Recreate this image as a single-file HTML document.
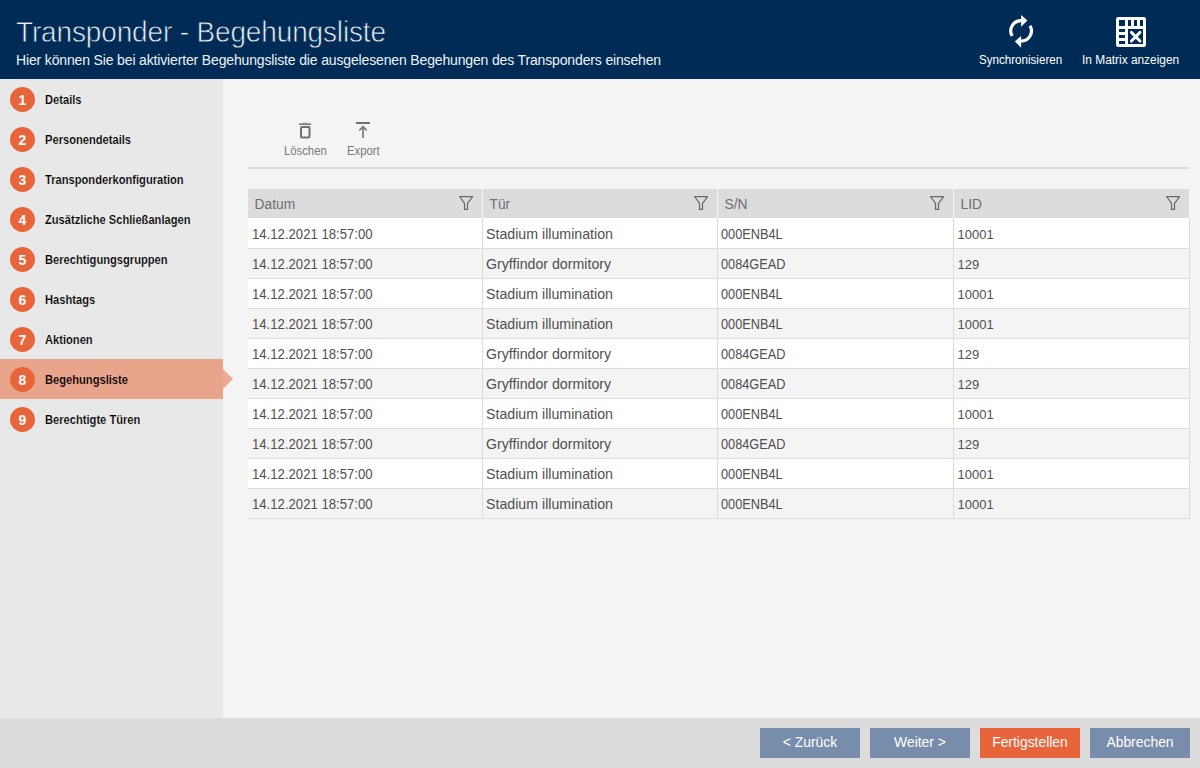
<!DOCTYPE html>
<html><head><meta charset="utf-8">
<style>
*{box-sizing:border-box;margin:0;padding:0}
html,body{width:1200px;height:768px;overflow:hidden;background:#f4f4f4;font-family:"Liberation Sans",sans-serif}
.abs{position:absolute;white-space:nowrap}
#hdr{position:absolute;left:0;top:0;width:1200px;height:79px;background:#002b56}
#title{left:16px;top:16px;font-size:28px;line-height:34px;color:#eef2f6;letter-spacing:-0.15px;-webkit-text-stroke:0.7px #002b56;transform:scaleY(1.08);transform-origin:0 26px}
#sub{left:16px;top:52px;font-size:14px;line-height:17px;color:#eef2f6;letter-spacing:-0.15px}
.hlbl{top:53px;font-size:11.6px;line-height:14px;color:#fff;transform:scaleY(1.1);transform-origin:0 11px}
#side{position:absolute;left:0;top:79px;width:223px;height:639px;background:#e8e8e8}
.item{position:absolute;left:0;width:223px;height:40px}
.item.sel{background:#e9a58c}
.circ{position:absolute;left:10px;top:8px;width:25px;height:25px;border-radius:50%;background:#e8643a;color:#fff;font-weight:bold;font-size:14px;line-height:26px;text-align:center}
.itxt{position:absolute;left:45px;top:14px;font-size:11.15px;line-height:14px;font-weight:bold;color:#000;white-space:nowrap;transform:scaleY(1.09);transform-origin:0 11px;-webkit-text-stroke:0.15px #e8e8e8}
.item.sel .itxt{-webkit-text-stroke-color:#e9a58c}
#arrow{position:absolute;left:223px;top:369px;width:0;height:0;border-top:10px solid transparent;border-bottom:10px solid transparent;border-left:10px solid #eeab94}
#foot{position:absolute;left:0;top:718px;width:1200px;height:50px;background:#dcdcdc}
.btn{position:absolute;top:728px;width:100px;height:30px;background:#788dac;color:#fff;font-size:13.9px;line-height:28px;text-align:center}
.btn.or{background:#e8643a}
.tlbl{top:144px;font-size:11.3px;line-height:14px;color:#777;transform:scaleY(1.12);transform-origin:0 11px}
#sep{position:absolute;left:248px;top:167px;width:942px;height:2px;background:#dcdcdc}
.hc{position:absolute;top:189px;height:29px;background:#dcdcdc}
.hc span{position:absolute;left:6.5px;top:9px;font-size:13.8px;line-height:14px;color:#6e6e6e;white-space:nowrap}
.fn{position:absolute;top:3px;width:24px;height:22px}
.fn svg{display:block}
.row{position:absolute;left:248px;width:941px;border-bottom:1px solid #dcdcdc}
.row.w{background:#fff}
.row.g{background:#f4f4f4}
.c{position:absolute;height:29px;font-size:13.15px;line-height:31px;color:#505050;white-space:nowrap}
.vl{position:absolute;top:218px;width:1px;height:301px;background:#dcdcdc}
.c{transform:scaleY(1.06);transform-origin:0 20px}.c2{font-size:14.2px;transform:none}.c3{font-size:12.75px;transform:scaleY(1.11)}.c4{font-size:13px;transform:scaleY(1.05)}
</style></head><body>
<div id="hdr"></div>
<div class="abs" id="title">Transponder - Begehungsliste</div>
<div class="abs" id="sub">Hier können Sie bei aktivierter Begehungsliste die ausgelesenen Begehungen des Transponders einsehen</div>
<div class="abs hlbl" style="left:979px">Synchronisieren</div>
<div class="abs hlbl" style="left:1082px;font-size:11.9px">In Matrix anzeigen</div>

<div id="side">
<div class="item" style="top:0"><div class="circ">1</div><div class="itxt">Details</div></div>
<div class="item" style="top:40px"><div class="circ">2</div><div class="itxt">Personendetails</div></div>
<div class="item" style="top:80px"><div class="circ">3</div><div class="itxt">Transponderkonfiguration</div></div>
<div class="item" style="top:120px"><div class="circ">4</div><div class="itxt">Zusätzliche Schließanlagen</div></div>
<div class="item" style="top:160px"><div class="circ">5</div><div class="itxt">Berechtigungsgruppen</div></div>
<div class="item" style="top:200px"><div class="circ">6</div><div class="itxt">Hashtags</div></div>
<div class="item" style="top:240px"><div class="circ">7</div><div class="itxt">Aktionen</div></div>
<div class="item sel" style="top:280px"><div class="circ">8</div><div class="itxt">Begehungsliste</div></div>
<div class="item" style="top:320px"><div class="circ">9</div><div class="itxt">Berechtigte Türen</div></div>
</div>
<div id="arrow"></div>

<div class="abs tlbl" style="left:284px">Löschen</div>
<div class="abs tlbl" style="left:347px">Export</div>
<div id="sep"></div>
<svg class="abs" style="left:1002px;top:10px" width="38" height="42" viewBox="0 0 38 42">
<path d="M19.1,10.6 A10.3,10.3 0 0 0 10.18,26.05" fill="none" stroke="#fff" stroke-width="3.2"/>
<path d="M19.1,4.9 L25.4,10.6 L19.1,16.7 Z" fill="#fff"/>
<path d="M19.1,31.2 A10.3,10.3 0 0 0 28.02,15.75" fill="none" stroke="#fff" stroke-width="3.2"/>
<path d="M19.1,26 L12.8,31.4 L19.1,37.7 Z" fill="#fff"/>
</svg>
<svg class="abs" style="left:1110px;top:12px" width="42" height="40" viewBox="1110 12 42 40">
<rect x="1116" y="17" width="30" height="30" rx="2.2" fill="#fff"/>
<g fill="#002b56">
<rect x="1119" y="20" width="6" height="6"/><rect x="1128" y="20" width="3" height="6"/><rect x="1134" y="20" width="3" height="6"/><rect x="1140" y="20" width="3" height="6"/>
<rect x="1119" y="29" width="6" height="3"/><rect x="1119" y="35" width="6" height="3"/><rect x="1119" y="41" width="6" height="3"/>
<rect x="1128" y="29" width="15" height="15"/>
</g>
<path d="M1131.4,32.4 L1140,41 M1140,32.4 L1131.4,41" stroke="#fff" stroke-width="2.9" stroke-linecap="round"/>
</svg>
<svg class="abs" style="left:290px;top:116px" width="90" height="26" viewBox="290 116 90 26">
<path d="M299,124.2 L311,124.2" stroke="#707070" stroke-width="1.5"/><path d="M302.5,123.2 L307.5,123.2" stroke="#8a8a8a" stroke-width="0.8"/>
<rect x="301" y="127" width="8.5" height="10.5" rx="1" fill="none" stroke="#707070" stroke-width="2"/>
<path d="M356,123 L370,123" stroke="#707070" stroke-width="2"/>
<path d="M363,127 L363,138" stroke="#707070" stroke-width="1.6"/>
<path d="M359.3,130.6 L363,126.7 L366.7,130.6" fill="none" stroke="#707070" stroke-width="1.5"/>
</svg>
<div class="hc" style="left:248px;width:234px"><span>Datum</span><div class="fn" style="left:206px"><svg width="24" height="22" viewBox="0 0 24 22"><path d="M5.6,4.5 L18.6,4.5 L13.5,11.3 L13.5,17.4 L10.5,17.4 L10.5,11.3 Z" fill="none" stroke="#6a6a6a" stroke-width="1.25" stroke-linejoin="round"/></svg></div></div>
<div class="hc" style="left:483px;width:234px"><span>Tür</span><div class="fn" style="left:206px"><svg width="24" height="22" viewBox="0 0 24 22"><path d="M5.6,4.5 L18.6,4.5 L13.5,11.3 L13.5,17.4 L10.5,17.4 L10.5,11.3 Z" fill="none" stroke="#6a6a6a" stroke-width="1.25" stroke-linejoin="round"/></svg></div></div>
<div class="hc" style="left:718px;width:235px"><span>S/N</span><div class="fn" style="left:207px"><svg width="24" height="22" viewBox="0 0 24 22"><path d="M5.6,4.5 L18.6,4.5 L13.5,11.3 L13.5,17.4 L10.5,17.4 L10.5,11.3 Z" fill="none" stroke="#6a6a6a" stroke-width="1.25" stroke-linejoin="round"/></svg></div></div>
<div class="hc" style="left:954px;width:235px"><span>LID</span><div class="fn" style="left:207px"><svg width="24" height="22" viewBox="0 0 24 22"><path d="M5.6,4.5 L18.6,4.5 L13.5,11.3 L13.5,17.4 L10.5,17.4 L10.5,11.3 Z" fill="none" stroke="#6a6a6a" stroke-width="1.25" stroke-linejoin="round"/></svg></div></div>
<div class="row w" style="top:218px;height:31px"></div>
<div class="c" style="left:252px;top:219px">14.12.2021 18:57:00</div>
<div class="c c2" style="left:486px;top:219px">Stadium illumination</div>
<div class="c c3" style="left:721px;top:219px">000ENB4L</div>
<div class="c c4" style="left:957.5px;top:219px">10001</div>
<div class="row g" style="top:249px;height:30px"></div>
<div class="c" style="left:252px;top:249px">14.12.2021 18:57:00</div>
<div class="c c2" style="left:486px;top:249px">Gryffindor dormitory</div>
<div class="c c3" style="left:721px;top:249px">0084GEAD</div>
<div class="c c4" style="left:957.5px;top:249px">129</div>
<div class="row w" style="top:279px;height:30px"></div>
<div class="c" style="left:252px;top:279px">14.12.2021 18:57:00</div>
<div class="c c2" style="left:486px;top:279px">Stadium illumination</div>
<div class="c c3" style="left:721px;top:279px">000ENB4L</div>
<div class="c c4" style="left:957.5px;top:279px">10001</div>
<div class="row g" style="top:309px;height:30px"></div>
<div class="c" style="left:252px;top:309px">14.12.2021 18:57:00</div>
<div class="c c2" style="left:486px;top:309px">Stadium illumination</div>
<div class="c c3" style="left:721px;top:309px">000ENB4L</div>
<div class="c c4" style="left:957.5px;top:309px">10001</div>
<div class="row w" style="top:339px;height:30px"></div>
<div class="c" style="left:252px;top:339px">14.12.2021 18:57:00</div>
<div class="c c2" style="left:486px;top:339px">Gryffindor dormitory</div>
<div class="c c3" style="left:721px;top:339px">0084GEAD</div>
<div class="c c4" style="left:957.5px;top:339px">129</div>
<div class="row g" style="top:369px;height:30px"></div>
<div class="c" style="left:252px;top:369px">14.12.2021 18:57:00</div>
<div class="c c2" style="left:486px;top:369px">Gryffindor dormitory</div>
<div class="c c3" style="left:721px;top:369px">0084GEAD</div>
<div class="c c4" style="left:957.5px;top:369px">129</div>
<div class="row w" style="top:399px;height:30px"></div>
<div class="c" style="left:252px;top:399px">14.12.2021 18:57:00</div>
<div class="c c2" style="left:486px;top:399px">Stadium illumination</div>
<div class="c c3" style="left:721px;top:399px">000ENB4L</div>
<div class="c c4" style="left:957.5px;top:399px">10001</div>
<div class="row g" style="top:429px;height:30px"></div>
<div class="c" style="left:252px;top:429px">14.12.2021 18:57:00</div>
<div class="c c2" style="left:486px;top:429px">Gryffindor dormitory</div>
<div class="c c3" style="left:721px;top:429px">0084GEAD</div>
<div class="c c4" style="left:957.5px;top:429px">129</div>
<div class="row w" style="top:459px;height:30px"></div>
<div class="c" style="left:252px;top:459px">14.12.2021 18:57:00</div>
<div class="c c2" style="left:486px;top:459px">Stadium illumination</div>
<div class="c c3" style="left:721px;top:459px">000ENB4L</div>
<div class="c c4" style="left:957.5px;top:459px">10001</div>
<div class="row g" style="top:489px;height:30px"></div>
<div class="c" style="left:252px;top:489px">14.12.2021 18:57:00</div>
<div class="c c2" style="left:486px;top:489px">Stadium illumination</div>
<div class="c c3" style="left:721px;top:489px">000ENB4L</div>
<div class="c c4" style="left:957.5px;top:489px">10001</div>
<div class="vl" style="left:482px"></div>
<div class="vl" style="left:717px"></div>
<div class="vl" style="left:953px"></div>
<div class="vl" style="left:1189px"></div>

<div id="foot"></div>
<div class="btn" style="left:760px">&lt; Zurück</div>
<div class="btn" style="left:870px">Weiter &gt;</div>
<div class="btn or" style="left:980px">Fertigstellen</div>
<div class="btn" style="left:1090px">Abbrechen</div>
</body></html>
